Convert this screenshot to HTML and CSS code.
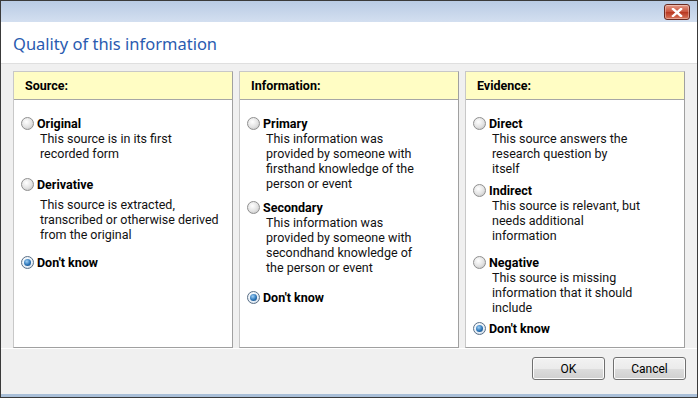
FILE: index.html
```html
<!DOCTYPE html>
<html lang="en">
<head>
    <meta charset="UTF-8">
    <title>Quality of this information</title>
    <link rel="stylesheet" href="styles.css">
</head>
<body>
    <div class="window">
        <div class="titlebar">
            <button class="close-btn" title="Close">
                <svg width="12" height="9" viewBox="0 0 12 9">
                    <path d="M2 1 L10 8 M10 1 L2 8" stroke="#ffffff" stroke-width="2.4" stroke-linecap="square"/>
                </svg>
            </button>
        </div>

        <div class="header">
            <h1>Quality of this information</h1>
        </div>

        <div class="content">
            <div class="panel">
                <div class="panel-head">Source:</div>
                <div class="panel-body">
                    <div class="option">
                        <label class="choice"><span class="radio"></span>Original</label>
                        <p class="desc">This source is in its first<br>recorded form</p>
                    </div>
                    <div class="option gap-15">
                        <label class="choice"><span class="radio"></span>Derivative</label>
                        <p class="desc pushed">This source is extracted,<br>transcribed or otherwise derived<br>from the original</p>
                    </div>
                    <div class="option gap-12">
                        <label class="choice"><span class="radio checked"></span>Don't know</label>
                    </div>
                </div>
            </div>

            <div class="panel">
                <div class="panel-head">Information:</div>
                <div class="panel-body">
                    <div class="option">
                        <label class="choice"><span class="radio"></span>Primary</label>
                        <p class="desc">This information was<br>provided by someone with<br>firsthand knowledge of the<br>person or event</p>
                    </div>
                    <div class="option gap-8">
                        <label class="choice"><span class="radio"></span>Secondary</label>
                        <p class="desc">This information was<br>provided by someone with<br>secondhand knowledge of<br>the person or event</p>
                    </div>
                    <div class="option gap-14">
                        <label class="choice"><span class="radio checked"></span>Don't know</label>
                    </div>
                </div>
            </div>

            <div class="panel">
                <div class="panel-head">Evidence:</div>
                <div class="panel-body">
                    <div class="option">
                        <label class="choice"><span class="radio"></span>Direct</label>
                        <p class="desc">This source answers the<br>research question by<br>itself</p>
                    </div>
                    <div class="option gap-6">
                        <label class="choice"><span class="radio"></span>Indirect</label>
                        <p class="desc">This source is relevant, but<br>needs additional<br>information</p>
                    </div>
                    <div class="option gap-11">
                        <label class="choice"><span class="radio"></span>Negative</label>
                        <p class="desc">This source is missing<br>information that it should<br>include</p>
                    </div>
                    <div class="option gap-5">
                        <label class="choice"><span class="radio checked"></span>Don't know</label>
                    </div>
                </div>
            </div>
        </div>

        <div class="footer">
            <button class="btn">OK</button>
            <button class="btn">Cancel</button>
        </div>
    </div>
</body>
</html>
```

FILE: styles.css
```css
* {
    box-sizing: border-box;
    margin: 0;
    padding: 0;
}

body {
    font-family: Roboto, "Liberation Sans", sans-serif;
    font-size: 12.5px;
    color: #000;
    background: #6f8fb3;
    width: 698px;
    height: 398px;
    overflow: hidden;
}

.window {
    width: 698px;
    height: 398px;
    display: flex;
    flex-direction: column;
    border: 1px solid #3a3a3a;
    border-top: none;
    background: #f0f0f0;
    box-shadow: inset 0 -3px 0 #a9bfd8;
}

.titlebar {
    height: 22px;
    display: flex;
    justify-content: flex-end;
    align-items: flex-start;
    padding: 3px 7px 0 0;
    background: linear-gradient(#b9cbe4, #d3dff0);
    border-top: 1px solid #3a3a3a;
}

.close-btn {
    width: 26px;
    height: 16px;
    border: 1px solid #6b2a20;
    border-radius: 3px;
    background: linear-gradient(#e59a88, #c9513a 50%, #b8361f 51%, #d9765c);
    display: flex;
    align-items: center;
    justify-content: center;
    box-shadow: inset 0 0 0 1px rgba(255, 255, 255, 0.35);
}

.header {
    height: 42px;
    background: #fff;
    display: flex;
    align-items: center;
    padding-left: 12px;
    border-bottom: 1px solid #dfdfdf;
}

.header h1 {
    font-family: "Noto Sans", "Open Sans", sans-serif;
    font-weight: normal;
    font-size: 16.5px;
    color: #2a5bb0;
    margin-top: 1px;
}

.content {
    display: grid;
    grid-template-columns: repeat(3, 220px);
    gap: 6px;
    padding: 7px 0 0 12px;
    height: 284px;
}

.panel {
    background: #fff;
    border: 1px solid #a0a0a0;
    border-top-color: #c8c8c8;
    border-left-color: #c8c8c8;
    display: flex;
    flex-direction: column;
}

.panel-head {
    height: 28px;
    background: #fffdc4;
    border-bottom: 1px solid #a6a6a6;
    font-weight: bold;
    display: flex;
    align-items: center;
    padding-left: 11px;
}

.panel-body {
    padding: 15px 0 0 7px;
}

.choice {
    display: flex;
    align-items: center;
    height: 16px;
    font-weight: bold;
}

.radio {
    width: 13px;
    height: 13px;
    border-radius: 50%;
    border: 1px solid #8f8f8f;
    background: radial-gradient(circle at 40% 35%, #ffffff, #e2e2e2 55%, #b9b9b9);
    margin-right: 3px;
    position: relative;
}

.radio.checked {
    border-color: #5a6f86;
    background: radial-gradient(circle at 40% 35%, #ffffff, #e6eef6 60%, #b8c8da);
}

.radio.checked::after {
    content: "";
    position: absolute;
    left: 2px;
    top: 2px;
    width: 7px;
    height: 7px;
    border-radius: 50%;
    background: radial-gradient(circle at 40% 35%, #9fd0f5, #2a74b8 55%, #153e6a);
}

.desc {
    padding-left: 19px;
    line-height: 15px;
    color: #111;
}

.desc.pushed {
    margin-top: 5px;
}

.gap-5 { margin-top: 5px; }
.gap-6 { margin-top: 6px; }
.gap-8 { margin-top: 8px; }
.gap-11 { margin-top: 11px; }
.gap-12 { margin-top: 12px; }
.gap-14 { margin-top: 14px; }
.gap-15 { margin-top: 15px; }

.footer {
    flex: 1;
    display: flex;
    justify-content: flex-end;
    align-items: flex-start;
    gap: 8px;
    padding: 8px 11px 0 0;
    border-top: 1px solid #fff;
}

.btn {
    width: 73px;
    height: 23px;
    font-family: inherit;
    font-size: 12px;
    color: #000;
    border: 1px solid #707070;
    border-radius: 3px;
    background: linear-gradient(#f2f2f2, #ebebeb 50%, #dddddd 51%, #cfcfcf);
    box-shadow: inset 0 0 0 1px #fcfcfc;
}
```
